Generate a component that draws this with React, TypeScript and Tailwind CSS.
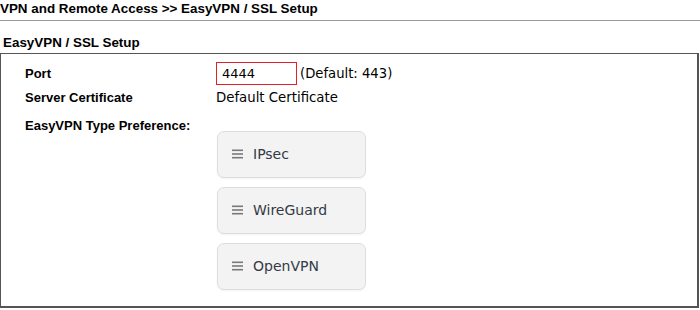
import React from "react";

const Item = ({ label }: { label: string }) => (
  <div className="flex h-[47px] w-[149px] items-center rounded-[7px] border border-[#dedede] bg-[#f3f3f3] pl-[14px] shadow-[0_1px_2px_rgba(0,0,0,0.05)]">
    <svg width="12" height="10" viewBox="0 0 12 10" className="mr-[9px]">
      <rect x="0" y="0.5" width="11" height="1.6" fill="#7a7a7a" />
      <rect x="0" y="4.2" width="11" height="1.6" fill="#7a7a7a" />
      <rect x="0" y="7.9" width="11" height="1.6" fill="#7a7a7a" />
    </svg>
    <span className="text-[14px] text-[#333a44]" style={{ fontFamily: "'DejaVu Sans', Verdana, sans-serif" }}>{label}</span>
  </div>
);

export default function App() {
  return (
    <div className="h-[310px] w-[700px] bg-white text-black" style={{ fontFamily: "'Liberation Sans', Arial, sans-serif" }}>
      <div className="h-[21px] border-b border-[#999] pt-[1px] text-[13.4px] font-bold leading-[15px]">
        VPN and Remote Access &gt;&gt; EasyVPN / SSL Setup
      </div>
      <div className="pl-[3px] pt-[14px] text-[13.4px] font-bold leading-[16px]">EasyVPN / SSL Setup</div>
      <div className="mt-[2px] h-[255px] w-[699px] border border-r-2 border-b-2 border-[#555] pl-[24px] pt-[8px]">
        <div className="flex items-center">
          <div className="w-[191px] text-[13px] font-bold">Port</div>
          <div className="flex h-[23px] w-[81px] items-center border border-[#e0202a] pl-[5px] text-[13px]" style={{ fontFamily: "'DejaVu Sans', Verdana, sans-serif" }}>
            4444
          </div>
          <span className="ml-[3px] text-[13.2px]" style={{ fontFamily: "'DejaVu Sans', Verdana, sans-serif" }}>(Default: 443)</span>
        </div>
        <div className="mt-[3px] flex items-center">
          <div className="w-[191px] text-[13px] font-bold">Server Certificate</div>
          <span className="text-[13.3px]" style={{ fontFamily: "'DejaVu Sans', Verdana, sans-serif" }}>Default Certificate</span>
        </div>
        <div className="mt-[10px] text-[13px] font-bold leading-[16px]">EasyVPN Type Preference:</div>
        <div className="ml-[192px] mt-[-3px] flex flex-col gap-[9px]">
          <Item label="IPsec" />
          <Item label="WireGuard" />
          <Item label="OpenVPN" />
        </div>
      </div>
    </div>
  );
}
